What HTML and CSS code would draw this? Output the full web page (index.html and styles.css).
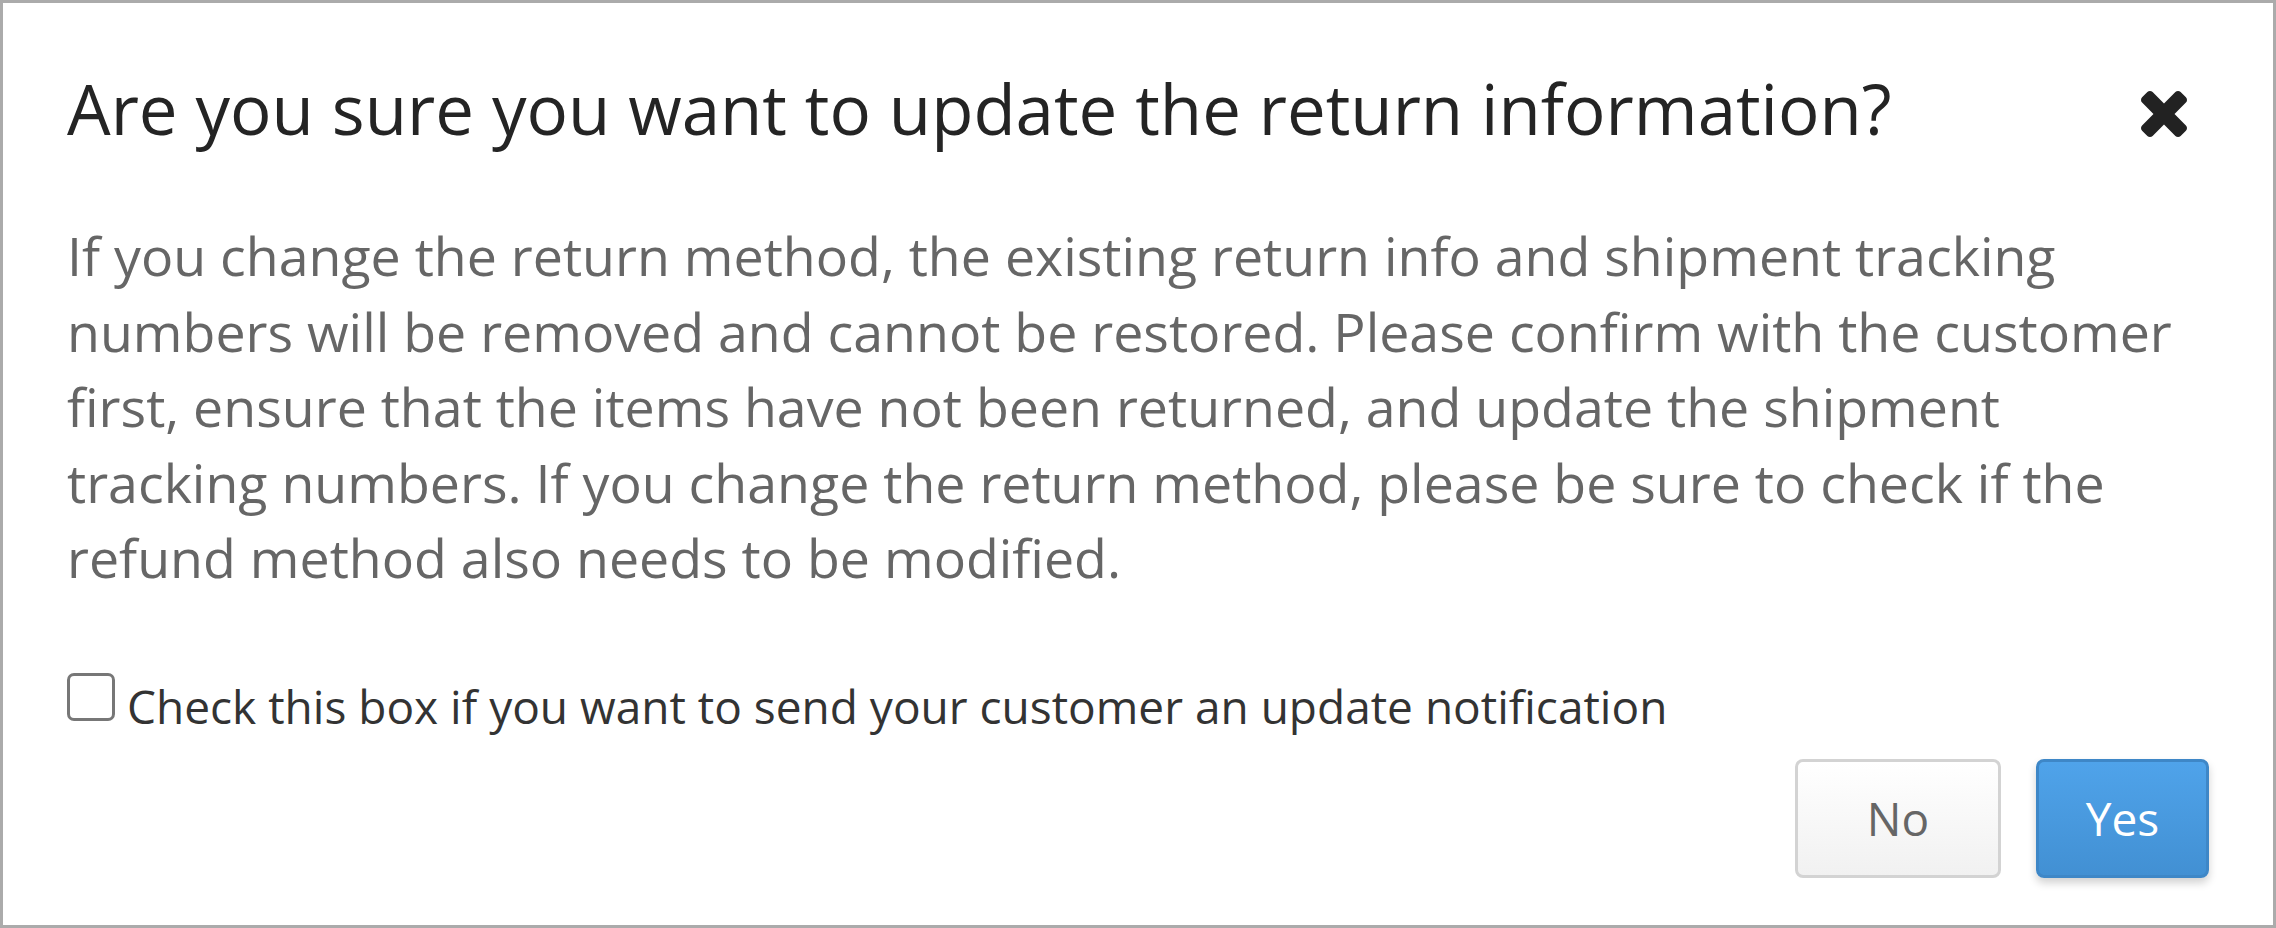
FILE: index.html
```html
<!DOCTYPE html>
<html lang="en">
<head>
<meta charset="utf-8">
<title>Update return information</title>
<link rel="stylesheet" href="styles.css">
</head>
<body>
<div class="dialog">
  <div class="dialog-header">
    <h1 class="dialog-title">Are you sure you want to update the return information?</h1>
    <button class="close-btn" aria-label="Close">
      <svg viewBox="110 366 1188 1188" width="46" height="46"><path fill="#222" d="M1298 1322q0 40-28 68l-136 136q-28 28-68 28t-68-28l-294-294-294 294q-28 28-68 28t-68-28l-136-136q-28-28-28-68t28-68l294-294-294-294q-28-28-28-68t28-68l136-136q28-28 68-28t68 28l294 294 294-294q28-28 68-28t68 28l136 136q28 28 28 68t-28 68l-294 294 294 294q28 28 28 68z"/></svg>
    </button>
  </div>
  <p class="dialog-text">If you change the return method, the existing return info and shipment tracking numbers will be removed and cannot be restored. Please confirm with the customer first, ensure that the items have not been returned, and update the shipment tracking numbers. If you change the return method, please be sure to check if the refund method also needs to be modified.</p>
  <label class="check-row">
    <span class="check-box"></span>
    <span class="check-label">Check this box if you want to send your customer an update notification</span>
  </label>
  <div class="dialog-footer">
    <button class="btn btn-no">No</button>
    <button class="btn btn-yes">Yes</button>
  </div>
</div>
</body>
</html>
```

FILE: styles.css
```css
html, body {
  margin: 0;
  padding: 0;
  background: #fff;
}

.dialog {
  box-sizing: border-box;
  width: 2276px;
  height: 928px;
  border: 3px solid #ababab;
  padding: 65px 64px 0 64px;
  font-family: "Open Sans", "Liberation Sans", sans-serif;
  background: #fff;
}

.dialog-header {
  display: flex;
  justify-content: space-between;
  align-items: flex-start;
}

.dialog-title {
  margin: 0;
  font-size: 69px;
  line-height: 80px;
  font-weight: 400;
  color: #242424;
}

.close-btn {
  border: 0;
  background: none;
  padding: 0;
  margin: 23px 22px 0 0;
  width: 46px;
  height: 46px;
  display: block;
  cursor: pointer;
}

.close-btn svg {
  display: block;
}

.dialog-text {
  margin: 70px 0 0 0;
  font-size: 53.7px;
  line-height: 75.5px;
  color: #666;
}

.check-row {
  display: flex;
  align-items: flex-start;
  margin-top: 77px;
  gap: 12px;
}

.check-box {
  box-sizing: border-box;
  width: 48px;
  height: 48px;
  border: 3px solid #777;
  border-radius: 7px;
  flex: none;
}

.check-label {
  font-size: 46px;
  line-height: 60px;
  padding-top: 3px;
  color: #333;
}

.dialog-footer {
  display: flex;
  justify-content: flex-end;
  gap: 35px;
  margin-top: 23px;
}

.btn {
  box-sizing: border-box;
  height: 119px;
  border-radius: 8px;
  border: 3px solid;
  font-family: "Open Sans", "Liberation Sans", sans-serif;
  font-size: 46px;
  padding: 0;
  cursor: pointer;
}

.btn-no {
  width: 206px;
  border-color: #d3d3d3;
  background: linear-gradient(#ffffff, #f1f1f1);
  color: #666;
}

.btn-yes {
  width: 173px;
  border-color: #3e87c7;
  background: linear-gradient(#4fa3ea, #4290d3);
  color: #fff;
  box-shadow: 0 5px 8px rgba(0, 0, 0, 0.18);
}
```
